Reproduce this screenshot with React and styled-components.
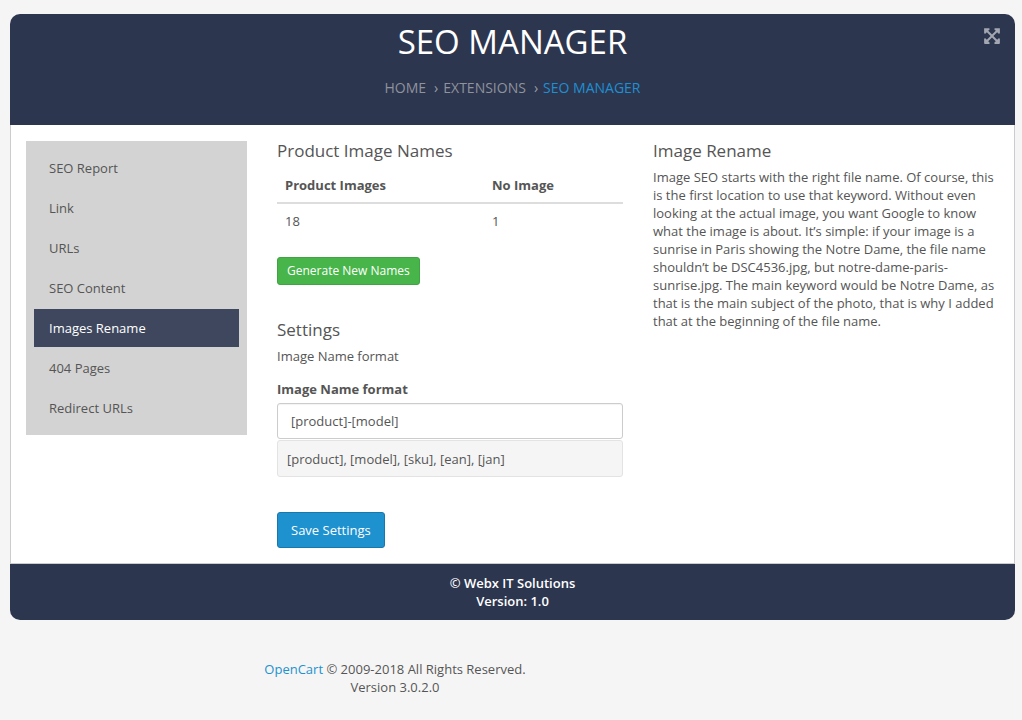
import React from "react";
import styled, { createGlobalStyle } from "styled-components";
import { FaExpandArrowsAlt } from "react-icons/fa";

const Global = createGlobalStyle`
  html, body { margin: 0; padding: 0; background: #f5f5f5; }
  body { font-family: "Open Sans", "Liberation Sans", sans-serif; font-size: 13px; line-height: 18px; color: #555; }
  * { box-sizing: border-box; }
`;
const Page = styled.div`
  width: 1022px; height: 720px; overflow: hidden; padding: 14px 7px 0 10px;
`;
const Panel = styled.div`
  border-radius: 10px; overflow: hidden;
`;
const Header = styled.header`
  position: relative; height: 111px; background: #2d364f; text-align: center; padding-top: 5px;
`;
const Title = styled.h1`
  margin: 0; font-size: 33px; line-height: 46px; font-weight: 400; color: #fff;
`;
const Crumbs = styled.div`
  margin-top: 13px; display: flex; justify-content: center; font-size: 14px; line-height: 20px; color: #8f939c;
`;
const Crumb = styled.span`
  color: ${p => (p.$active ? "#1f8fd2" : "#8f939c")};
  &:not(:first-child)::before { content: "›"; margin: 0 5px 0 8px; color: #9a9ea6; }
`;
const Expand = styled.span`
  position: absolute; top: 13px; right: 14px; color: #a3a7b1; display: flex;
`;
const Body = styled.main`
  background: #fff; border: solid #ccc; border-width: 0 1px 1px; height: 439px;
  padding: 16px 15px 0; display: flex;
`;
const Sidebar = styled.nav`
  width: 221px; height: 294px; background: #d3d3d3; padding: 8px; flex: none;
`;
const NavItem = styled.div`
  height: 38px; margin-bottom: 2px; padding-left: 15px; display: flex; align-items: center;
  width: 205px; background: ${p => (p.$active ? "#3e475e" : "transparent")};
  color: ${p => (p.$active ? "#fff" : "#555")};
`;
const Column = styled.section`
  width: 346px; margin-left: 30px; flex: none;
`;
const SideColumn = styled(Column)`
  width: 347px;
`;
const Heading = styled.h3`
  margin: 0 0 7px; font-size: 17px; line-height: 20px; font-weight: 400; color: #555;
  margin-top: ${p => p.$top || 0}px;
`;
const Table = styled.div`
  display: grid; grid-template-columns: 207px 1fr;
`;
const Cell = styled.div`
  padding: 8px; height: ${p => (p.$head ? 36 : 37)}px;
  font-weight: ${p => (p.$head ? 700 : 400)};
  border-bottom: ${p => (p.$head ? "2px solid #ddd" : "none")};
`;
const Button = styled.button`
  display: block; font: inherit; color: #fff; border-radius: 3px; cursor: pointer;
  background: ${p => (p.$green ? "#47b549" : "#1e91cf")};
  border: 1px solid ${p => (p.$green ? "#3fa441" : "#1978ab")};
  height: ${p => (p.$green ? 28 : 36)}px;
  padding: 0 ${p => (p.$green ? 9 : 13)}px;
  font-size: ${p => (p.$green ? 12 : 13)}px;
  margin-top: ${p => p.$top}px;
`;
const Plain = styled.div`
  margin-bottom: 15px;
`;
const Label = styled.div`
  font-weight: 700; margin-bottom: 5px;
`;
const Input = styled.div`
  height: 36px; border: 1px solid #ccc; border-radius: 3px; padding: 0 13px;
  display: flex; align-items: center; background: #fff; box-shadow: inset 0 1px 1px rgba(0,0,0,.05);
`;
const Hint = styled.div`
  height: 37px; border: 1px solid #e3e3e3; border-radius: 3px; padding: 0 9px; margin-top: 1px;
  display: flex; align-items: center; background: #f5f5f5;
`;
const Para = styled.p`
  margin: 0; line-height: 18px; color: #555;
`;
const PanelFooter = styled.div`
  height: 56px; background: #2d364f; color: #fff; text-align: center; padding-top: 10px; font-weight: 600;
`;
const PageFooter = styled.footer`
  width: 770px; text-align: center; margin-top: 40px; line-height: 18px;
`;
const Link = styled.a`
  color: #1e91cf; text-decoration: none;
`;

const nav = ["SEO Report", "Link", "URLs", "SEO Content", "Images Rename", "404 Pages", "Redirect URLs"];

export default function App() {
  return (
    <Page>
      <Global />
      <Panel>
        <Header>
          <Title>SEO MANAGER</Title>
          <Crumbs>
            <Crumb>HOME</Crumb><Crumb>EXTENSIONS</Crumb><Crumb $active>SEO MANAGER</Crumb>
          </Crumbs>
          <Expand><FaExpandArrowsAlt size={18} /></Expand>
        </Header>
        <Body>
          <Sidebar>
            {nav.map(n => <NavItem key={n} $active={n === "Images Rename"}>{n}</NavItem>)}
          </Sidebar>
          <Column>
            <Heading>Product Image Names</Heading>
            <Table>
              <Cell $head>Product Images</Cell><Cell $head>No Image</Cell>
              <Cell>18</Cell><Cell>1</Cell>
            </Table>
            <Button $green $top={16}>Generate New Names</Button>
            <Heading $top={35}>Settings</Heading>
            <Plain>Image Name format</Plain>
            <Label>Image Name format</Label>
            <Input>[product]-[model]</Input>
            <Hint>[product], [model], [sku], [ean], [jan]</Hint>
            <Button $top={35}>Save Settings</Button>
          </Column>
          <SideColumn>
            <Heading>Image Rename</Heading>
            <Para>Image SEO starts with the right file name. Of course, this is the first location to use that keyword. Without even looking at the actual image, you want Google to know what the image is about. It’s simple: if your image is a sunrise in Paris showing the Notre Dame, the file name shouldn’t be DSC4536.jpg, but notre-dame-paris-sunrise.jpg. The main keyword would be Notre Dame, as that is the main subject of the photo, that is why I added that at the beginning of the file name.</Para>
          </SideColumn>
        </Body>
        <PanelFooter>© Webx IT Solutions<br />Version: 1.0</PanelFooter>
      </Panel>
      <PageFooter><Link>OpenCart</Link> © 2009-2018 All Rights Reserved.<br />Version 3.0.2.0</PageFooter>
    </Page>
  );
}
